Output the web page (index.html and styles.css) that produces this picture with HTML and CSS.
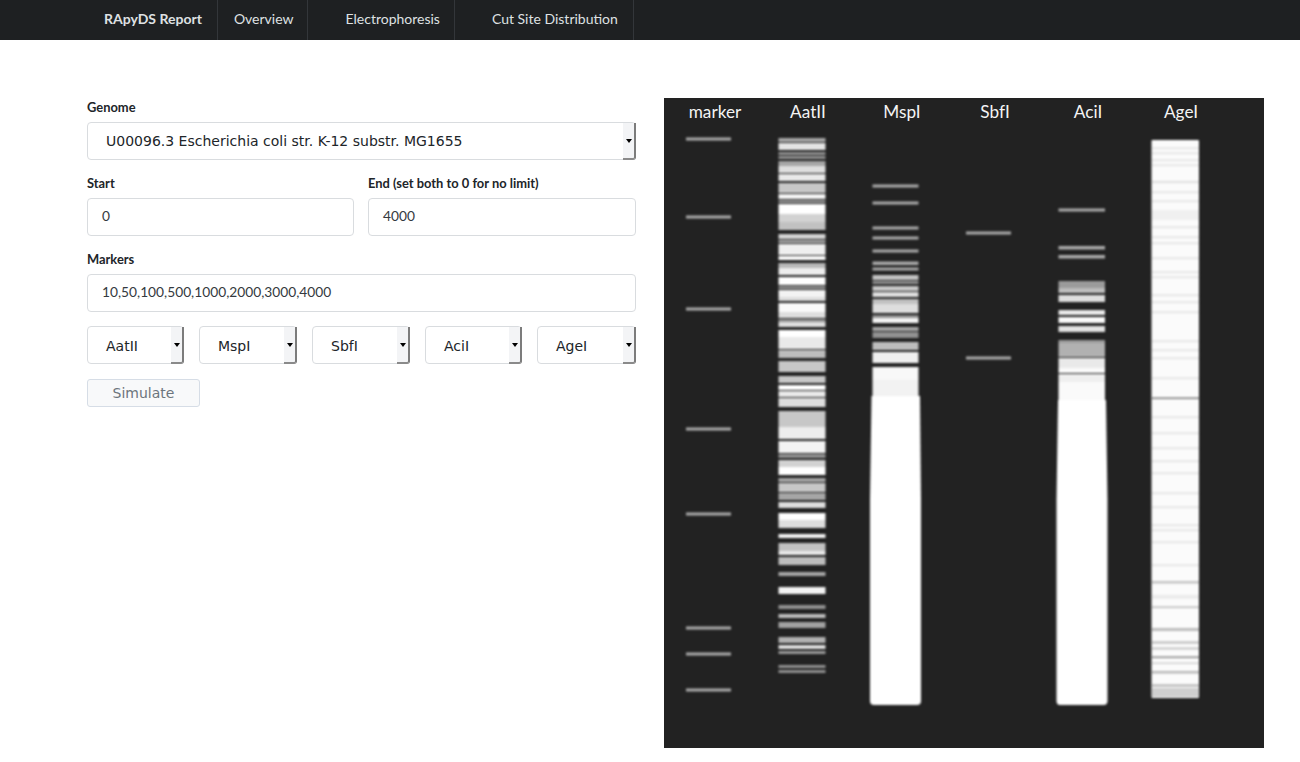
FILE: index.html
```html
<!DOCTYPE html>
<html lang="en">
<head>
<meta charset="utf-8">
<title>RApyDS Report</title>
<link rel="stylesheet" href="styles.css">
</head>
<body>
<nav class="navbar">
  <a class="brand nav-item">RApyDS Report</a>
  <a class="nav-item first">Overview</a>
  <a class="nav-item">Electrophoresis</a>
  <a class="nav-item">Cut Site Distribution</a>
</nav>
<main class="main">
  <form class="form">
    <div class="group">
      <label class="label">Genome</label>
      <div class="select wide"><span class="select-text">U00096.3 Escherichia coli str. K-12 substr. MG1655</span><span class="spin"><i class="caret"></i></span></div>
    </div>
    <div class="two">
      <div class="group">
        <label class="label">Start</label>
        <div class="input">0</div>
      </div>
      <div class="group">
        <label class="label">End (set both to 0 for no limit)</label>
        <div class="input">4000</div>
      </div>
    </div>
    <div class="group">
      <label class="label">Markers</label>
      <div class="input">10,50,100,500,1000,2000,3000,4000</div>
    </div>
    <div class="enzymes">
      <div class="select"><span class="select-text">AatII</span><span class="spin"><i class="caret"></i></span></div>
      <div class="select"><span class="select-text">MspI</span><span class="spin"><i class="caret"></i></span></div>
      <div class="select"><span class="select-text">SbfI</span><span class="spin"><i class="caret"></i></span></div>
      <div class="select"><span class="select-text">AciI</span><span class="spin"><i class="caret"></i></span></div>
      <div class="select"><span class="select-text">AgeI</span><span class="spin"><i class="caret"></i></span></div>
    </div>
    <div class="actions"><button class="button" type="button">Simulate</button></div>
  </form>
  <svg class="gel" viewBox="664 98 600 650" width="600" height="650" xmlns="http://www.w3.org/2000/svg">
    <rect x="664" y="98" width="600" height="650" fill="#222"/>
    <g class="gel-labels" text-anchor="middle" fill="#f4f4f4">
      <text x="715" y="118">marker</text>
      <text x="808" y="118">AatII</text>
      <text x="902" y="118">MspI</text>
      <text x="995" y="118">SbfI</text>
      <text x="1088" y="118">AciI</text>
      <text x="1181" y="118">AgeI</text>
    </g>
    <g class="bands" fill="#fff">
      <g opacity=".62">
        <rect x="686" y="137.5" width="45" height="3"/><rect x="686" y="215.5" width="45" height="3"/><rect x="686" y="307.5" width="45" height="3"/><rect x="686" y="427.5" width="45" height="3"/><rect x="686" y="512.5" width="45" height="3"/><rect x="686" y="626.5" width="45" height="3"/><rect x="686" y="652.5" width="45" height="3"/><rect x="686" y="688.5" width="45" height="3"/>
      </g>
      <g>
        <rect x="778.500" y="138" width="47" height="4" opacity=".6"/><rect x="778.500" y="143" width="47" height="7" opacity=".88"/><rect x="778.500" y="152" width="47" height="3" opacity=".5"/><rect x="778.500" y="156" width="47" height="3" opacity=".5"/><rect x="778.500" y="161" width="47" height="5" opacity=".6"/><rect x="778.500" y="166" width="47" height="7" opacity=".85"/><rect x="778.500" y="174" width="47" height="7" opacity=".9"/><rect x="778.500" y="183" width="47" height="10" opacity=".75"/><rect x="778.500" y="194" width="47" height="5" opacity=".95"/><rect x="778.500" y="200" width="47" height="3" opacity=".5"/><rect x="778.500" y="204" width="47" height="10" opacity="1"/><rect x="778.500" y="214" width="47" height="8" opacity=".8"/><rect x="778.500" y="222" width="47" height="8" opacity=".72"/>
        <rect x="778.500" y="234" width="47" height="5" opacity=".8"/><rect x="778.500" y="240" width="47" height="3" opacity=".6"/><rect x="778.500" y="244" width="47" height="11" opacity=".93"/><rect x="778.500" y="256" width="47" height="4" opacity="1"/><rect x="778.500" y="263" width="47" height="5" opacity=".68"/><rect x="778.500" y="268" width="47" height="7" opacity=".92"/><rect x="778.500" y="277" width="47" height="8" opacity="1"/><rect x="778.500" y="286" width="47" height="3" opacity=".5"/><rect x="778.500" y="290" width="47" height="7" opacity=".95"/><rect x="778.500" y="297" width="47" height="4" opacity=".85"/>
        <rect x="778.500" y="303" width="47" height="9" opacity=".98"/><rect x="778.500" y="312" width="47" height="6" opacity=".85"/><rect x="778.500" y="319" width="47" height="3" opacity=".5"/><rect x="778.500" y="322" width="47" height="5" opacity=".85"/><rect x="778.500" y="330" width="47" height="7" opacity="1"/><rect x="778.500" y="337" width="47" height="12" opacity=".9"/><rect x="778.500" y="350" width="47" height="8" opacity=".7"/>
        <rect x="778.500" y="361" width="47" height="11" opacity=".75"/><rect x="778.500" y="376" width="47" height="7" opacity=".75"/><rect x="778.500" y="385" width="47" height="5" opacity="1"/><rect x="778.500" y="391" width="47" height="6" opacity=".9"/><rect x="778.500" y="398" width="47" height="9" opacity=".85"/>
        <rect x="778.500" y="411" width="47" height="16" opacity=".75"/><rect x="778.500" y="427" width="47" height="12" opacity=".92"/><rect x="778.500" y="441" width="47" height="12" opacity=".95"/><rect x="778.500" y="454" width="47" height="4" opacity=".5"/><rect x="778.500" y="460" width="47" height="7" opacity=".8"/><rect x="778.500" y="467" width="47" height="8" opacity="1"/><rect x="778.500" y="478" width="47" height="4" opacity=".6"/><rect x="778.500" y="483" width="47" height="9" opacity=".75"/><rect x="778.500" y="493" width="47" height="7" opacity=".6"/><rect x="778.500" y="502" width="47" height="6" opacity=".85"/><rect x="778.500" y="513" width="47" height="7" opacity="1"/>
        <rect x="778.500" y="520" width="47" height="8" opacity=".85"/><rect x="778.500" y="534" width="47" height="4" opacity=".95"/><rect x="778.500" y="543" width="47" height="8" opacity=".72"/><rect x="778.500" y="551" width="47" height="4" opacity=".9"/><rect x="778.500" y="557" width="47" height="8" opacity=".7"/><rect x="778.500" y="572" width="47" height="4" opacity=".6"/><rect x="778.500" y="587" width="47" height="7" opacity=".95"/><rect x="778.500" y="605" width="47" height="4" opacity=".5"/><rect x="778.500" y="614" width="47" height="4" opacity=".7"/><rect x="778.500" y="622" width="47" height="6" opacity=".58"/><rect x="778.500" y="637" width="47" height="6" opacity=".65"/><rect x="778.500" y="645" width="47" height="4" opacity=".85"/><rect x="778.500" y="651" width="47" height="3" opacity=".55"/><rect x="778.500" y="665" width="47" height="3" opacity=".5"/><rect x="778.500" y="670" width="47" height="3" opacity=".5"/>
      </g>
      <g>
        <rect x="872.500" y="184.500" width="46" height="3" opacity=".62"/><rect x="872.500" y="201.500" width="46" height="3" opacity=".62"/><rect x="872.500" y="226.500" width="46" height="3" opacity=".62"/><rect x="872.500" y="236.500" width="46" height="3" opacity=".62"/><rect x="872.500" y="249.500" width="46" height="3" opacity=".62"/><rect x="872.500" y="261.500" width="46" height="3.500" opacity=".62"/><rect x="872.500" y="267.500" width="46" height="3" opacity=".62"/>
        <rect x="872.500" y="275" width="46" height="5" opacity=".72"/><rect x="872.500" y="281" width="46" height="3" opacity=".5"/><rect x="872.500" y="286" width="46" height="5" opacity=".75"/><rect x="872.500" y="292" width="46" height="5" opacity=".85"/><rect x="872.500" y="299" width="46" height="5" opacity=".72"/><rect x="872.500" y="304" width="46" height="9" opacity=".85"/><rect x="872.500" y="315" width="46" height="3" opacity=".5"/><rect x="872.500" y="318" width="46" height="5" opacity=".95"/><rect x="872.500" y="327" width="46" height="4" opacity=".6"/><rect x="872.500" y="332" width="46" height="6" opacity=".5"/><rect x="872.500" y="342" width="46" height="8" opacity=".7"/><rect x="872.500" y="352" width="46" height="11" opacity=".93"/><rect x="872.500" y="367" width="46" height="13" opacity=".97"/><rect x="872.500" y="380" width="46" height="16" opacity=".94"/>
        <path d="M871.500 396H920L921 500V701Q921 705 917 705H874Q870 705 870 701V500Z"/>
      </g>
      <g opacity=".62"><rect x="966" y="231.500" width="45" height="3"/><rect x="966" y="356.500" width="45" height="3"/></g>
      <g>
        <rect x="1058.500" y="208.500" width="46.500" height="3" opacity=".62"/><rect x="1058.500" y="246" width="46.500" height="3.500" opacity=".62"/><rect x="1058.500" y="255" width="46.500" height="3.500" opacity=".62"/>
        <rect x="1058.500" y="281" width="46.500" height="7" opacity=".55"/><rect x="1058.500" y="288" width="46.500" height="5" opacity=".7"/><rect x="1058.500" y="295" width="46.500" height="7" opacity=".85"/><rect x="1058.500" y="310" width="46.500" height="5" opacity=".9"/><rect x="1058.500" y="317" width="46.500" height="6" opacity=".98"/><rect x="1058.500" y="326" width="46.500" height="6" opacity=".88"/><rect x="1058.500" y="340" width="46.500" height="3" opacity=".55"/><rect x="1058.500" y="343" width="46.500" height="14" opacity=".65"/><rect x="1058.500" y="358" width="46.500" height="10" opacity=".9"/><rect x="1058.500" y="368" width="46.500" height="5" opacity=".98"/><rect x="1058.500" y="374" width="46.500" height="8" opacity=".93"/><rect x="1058.500" y="382" width="46.500" height="18" opacity=".98"/>
        <path d="M1058 400H1106L1107.500 500V701Q1107.500 705 1103.500 705H1060Q1056.500 705 1056.500 701V500Z"/>
      </g>
      <rect x="1151.500" y="140" width="47.500" height="558" rx="1" opacity=".985"/>
    </g>
    <g class="bands" fill="#222">
      <g opacity=".12"><rect x="1151" y="147.500" width="49" height="1.500"/><rect x="1151" y="152.500" width="49" height="1.500"/><rect x="1151" y="159.500" width="49" height="1.500"/><rect x="1151" y="164.500" width="49" height="1.500"/><rect x="1151" y="181" width="49" height="2"/><rect x="1151" y="191.500" width="49" height="1.500"/><rect x="1151" y="200.500" width="49" height="1.500"/><rect x="1151" y="210" width="49" height="10" opacity=".4"/><rect x="1151" y="226.500" width="49" height="1.500"/><rect x="1151" y="236.500" width="49" height="1.500"/><rect x="1151" y="242.500" width="49" height="1.500"/><rect x="1151" y="257.500" width="49" height="1.500"/><rect x="1151" y="271.500" width="49" height="1.500"/><rect x="1151" y="276.500" width="49" height="1.500"/><rect x="1151" y="294.500" width="49" height="1.500"/><rect x="1151" y="301.500" width="49" height="1.500"/><rect x="1151" y="311.500" width="49" height="1.500"/><rect x="1151" y="340.500" width="49" height="1.500"/><rect x="1151" y="349.500" width="49" height="1.500"/><rect x="1151" y="357.500" width="49" height="1.500"/><rect x="1151" y="377.500" width="49" height="1.500"/><rect x="1151" y="416.500" width="49" height="1.500"/><rect x="1151" y="432.500" width="49" height="1.500"/><rect x="1151" y="447.500" width="49" height="1.500"/><rect x="1151" y="460.500" width="49" height="1.500"/><rect x="1151" y="472.500" width="49" height="1.500"/><rect x="1151" y="492.500" width="49" height="1.500"/><rect x="1151" y="506.500" width="49" height="1.500"/><rect x="1151" y="524.500" width="49" height="1.500"/><rect x="1151" y="529.500" width="49" height="1.500"/><rect x="1151" y="541.500" width="49" height="1.500"/><rect x="1151" y="564.500" width="49" height="1.500"/></g>
      <rect x="1151" y="397.500" width="49" height="1.500" opacity=".6"/>
      <rect x="1151" y="581" width="49" height="2.500" opacity=".25"/><rect x="1151" y="595" width="49" height="3.500" opacity=".08"/><rect x="1151" y="606.500" width="49" height="1.500" opacity=".3"/><rect x="1151" y="628" width="49" height="3" opacity=".28"/><rect x="1151" y="641.500" width="49" height="2" opacity=".3"/><rect x="1151" y="647.500" width="49" height="2" opacity=".25"/><rect x="1151" y="656.500" width="49" height="1.500" opacity=".55"/><rect x="1151" y="662.500" width="49" height="1.500" opacity=".2"/><rect x="1151" y="671" width="49" height="2.500" opacity=".3"/><rect x="1151" y="684.500" width="49" height="2" opacity=".35"/><rect x="1151" y="688" width="49" height="9" opacity=".2"/>
    </g>
  </svg>
</main>
</body>
</html>
```
FILE: styles.css
```css
* { box-sizing: border-box; }
html, body { margin: 0; padding: 0; }
body {
  background: #fff;
  color: #212529;
  font-family: Lato, "Liberation Sans", sans-serif;
  font-size: 14px;
  height: 762px;
  overflow: hidden;
}
.navbar {
  display: flex;
  height: 40px;
  padding-left: 89px;
  background: #1e2022;
  color: #dfe1e3;
  font-size: 14px;
  line-height: 38px;
}
.nav-item {
  padding: 0 15px 0 37px;
  border-right: 1px solid #33363a;
}
.brand {
  padding: 0 15px;
  font-weight: 700;
  font-size: 14px;
}
.nav-item.first { padding-left: 16px; padding-right: 14px; }
.nav-item:nth-child(3) { padding-left: 37px; padding-right: 14px; }
.main {
  display: flex;
  gap: 28px;
  padding: 58px 0 0 87px;
}
.form {
  display: flex;
  flex-direction: column;
  gap: 14px;
  width: 549px;
  flex: none;
}
.two {
  display: grid;
  grid-template-columns: 267px 268px;
  gap: 14px;
}
.label {
  display: block;
  height: 19px;
  margin-bottom: 5px;
  font-size: 12.9px;
  font-weight: 700;
  line-height: 19px;
  color: #212529;
}
.input {
  height: 38px;
  padding: 0 14px;
  border: 1px solid #d9dcdf;
  border-radius: 4px;
  font-size: 13.75px;
  line-height: 34px;
  color: #343a40;
}
.select {
  display: flex;
  height: 38px;
  border: 1px solid #d9dcdf;
  border-radius: 4px;
  background: #fff;
  font-family: "DejaVu Sans", sans-serif;
  font-size: 14px;
  color: #212529;
}
.select-text {
  flex: 1;
  padding-left: 18px;
  line-height: 36px;
  white-space: nowrap;
}
.enzymes .select-text { line-height: 38px; }
.spin {
  display: flex;
  align-items: center;
  justify-content: center;
  width: 13px;
  flex: none;
  margin: 0 -1px -1px 0;
  background: #f3f4f6;
  border-right: 2px solid #7c7c7c;
  border-bottom: 2px solid #8a8a8a;
  border-bottom-right-radius: 3px;
}
.caret {
  width: 0;
  height: 0;
  border-left: 3px solid transparent;
  border-right: 3px solid transparent;
  border-top: 4px solid #000;
}
.enzymes {
  display: grid;
  grid-template-columns: 97px 98px 98px 97px 99px;
  gap: 15px;
}
.actions { margin-top: 1px; }
.button {
  display: block;
  width: 113px;
  height: 28px;
  padding: 0;
  border: 1px solid #d6dde6;
  border-radius: 3px;
  background: #f8f9fa;
  color: #6c757d;
  font-family: "DejaVu Sans", sans-serif;
  font-size: 14px;
}
.gel { display: block; flex: none; }
.gel-labels {
  font-family: Lato, sans-serif;
  font-size: 17.2px;
}
.bands { filter: blur(0.9px); }
```
